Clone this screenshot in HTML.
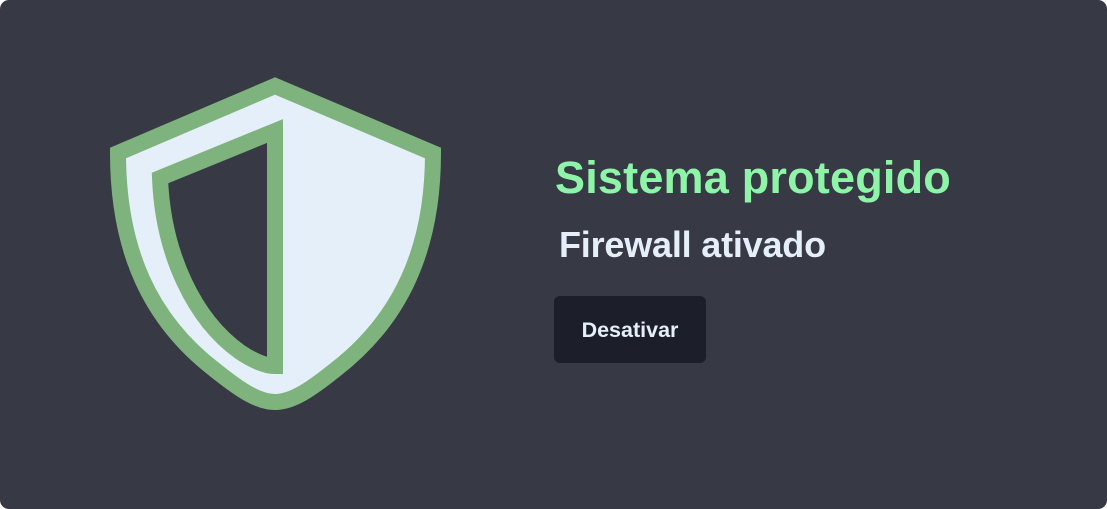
<!DOCTYPE html>
<html><head><meta charset="utf-8"><style>
html,body{margin:0;padding:0;background:#fff;width:1107px;height:509px;overflow:hidden}
.card{position:absolute;left:0;top:0;width:1107px;height:509px;background:#373945;border-radius:9px}
svg{position:absolute;left:0;top:0}
.t1{position:absolute;left:555px;top:151px;font:700 45px/54px "Liberation Sans",sans-serif;color:#8ef5a8;white-space:nowrap;letter-spacing:0.2px}
.t2{position:absolute;left:559px;top:224px;font:700 36px/42px "Liberation Sans",sans-serif;color:#e5eff9;white-space:nowrap;letter-spacing:-0.2px}
.btn{position:absolute;left:554px;top:296px;width:152px;height:67px;background:#1c1f29;border-radius:6px;color:#e5eff9;font:700 21.5px "Liberation Sans",sans-serif;display:flex;align-items:center;justify-content:center;padding-top:2px;box-sizing:border-box}
</style></head><body>
<div class="card"></div>
<svg width="1107" height="509" viewBox="0 0 1107 509">
<path d="M275 86 L118 153 C118 250 150 320 215 370 C240 390 258 402 275 402 C292 402 310 390 335 370 C400 320 433 250 433 153 Z" fill="#e5eff9" stroke="#7fb37e" stroke-width="16" stroke-linejoin="miter"/>
<path d="M275 131 L160 178 C163 255 195 320 240 352 C255 362 266 366 275 366 Z" fill="#373945" stroke="#7fb37e" stroke-width="16" stroke-linejoin="miter" stroke-miterlimit="2"/>
</svg>
<div class="t1">Sistema protegido</div>
<div class="t2">Firewall ativado</div>
<div class="btn">Desativar</div>
</body></html>
